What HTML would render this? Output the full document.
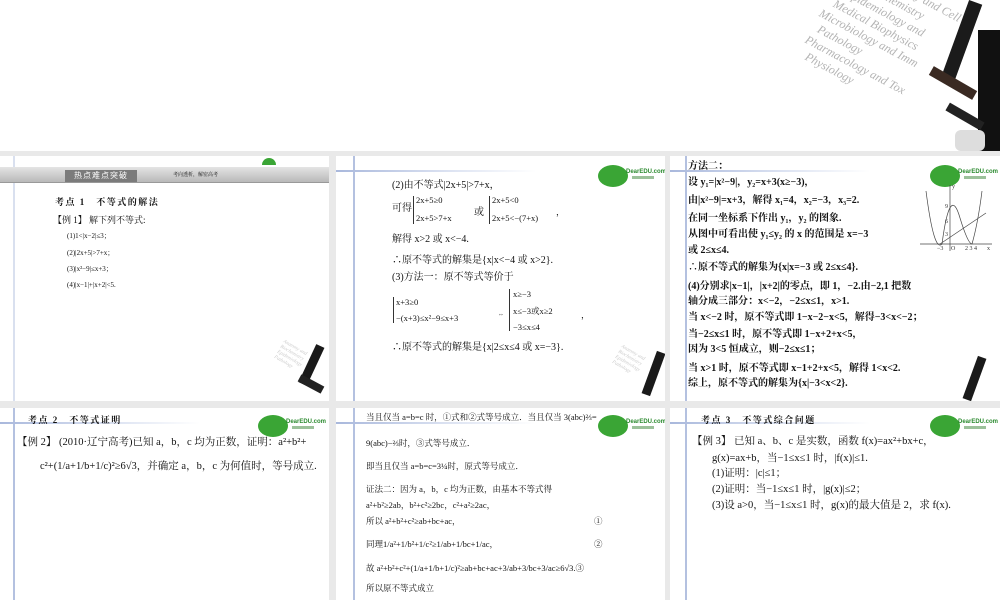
<!DOCTYPE html>
<html><head><meta charset="utf-8"><style>
*{margin:0;padding:0;box-sizing:border-box}
body{width:1000px;height:600px;background:#e9e9e9;position:relative;overflow:hidden;font-family:"Liberation Serif","Noto Serif CJK SC",serif;color:#111}
.s{position:absolute;background:#fff;overflow:hidden}
.t{position:absolute;font-size:9px;white-space:nowrap;line-height:1}
.b{font-weight:bold}
.vl{position:absolute;width:2px;background:#b4c1e0}
.hl{position:absolute;height:2px;background:linear-gradient(90deg,#a9b8dc,#dfe5f3 60%,#fff)}
.logo{position:absolute;width:80px;height:30px}
.logo .c{position:absolute;left:4px;top:4px;width:30px;height:22px;border-radius:50%;background:#3aa535}
.logo .w{position:absolute;left:32px;top:8px;font:bold 6px "Liberation Sans",sans-serif;color:#2b8a2f}
.logo .w2{position:absolute;left:38px;top:15px;width:22px;height:3px;background:#9bc19a}
</style></head><body>

<div class="s" style="left:0;top:0;width:1000px;height:151px">
  <div style="position:absolute;left:800px;top:-10px;width:200px;height:170px;transform:rotate(28deg);color:#b3b3b3;font:italic 12px 'Liberation Serif',serif;line-height:15px">
    <div style="margin-left:40px">Anatomy and Cell</div>
    <div style="margin-left:30px">Biochemistry</div>
    <div style="margin-left:14px">Epidemiology and</div>
    <div style="margin-left:8px">Medical Biophysics</div>
    <div>Microbiology and Imm</div>
    <div style="margin-left:6px">Pathology</div>
    <div>Pharmacology and Tox</div>
    <div style="margin-left:8px">Physiology</div>
  </div>
  <div style="position:absolute;left:955px;top:0;width:14px;height:80px;background:#1b1b1b;transform:rotate(20deg)"></div>
  <div style="position:absolute;left:928px;top:78px;width:50px;height:10px;background:#3a2a22;transform:rotate(30deg)"></div>
  <div style="position:absolute;left:978px;top:30px;width:22px;height:121px;background:#111"></div>
  <div style="position:absolute;left:945px;top:112px;width:40px;height:9px;background:#222;transform:rotate(30deg)"></div>
  <div style="position:absolute;left:955px;top:130px;width:30px;height:21px;background:#ddd;border-radius:6px"></div>
</div>

<!-- slide 1 -->
<div class="s" style="left:0;top:156px;width:329px;height:245px">
  <div class="vl" style="left:13px;top:0;height:245px;opacity:.5"></div>
  <div style="position:absolute;left:0;top:11px;width:329px;height:16px;background:linear-gradient(#e4e4e4,#b9b9b9);border-bottom:1px solid #999"></div>
  <div style="position:absolute;left:65px;top:14px;width:72px;height:12px;background:#7b7b7b;color:#fff;font:8px 'Noto Sans CJK SC',sans-serif;text-align:center;line-height:12px;letter-spacing:1px">热点难点突破</div>
  <div class="t" style="left:173px;top:17px;font-size:5px">考向透析，解密高考</div>
  <div style="position:absolute;left:262px;top:2px;width:14px;height:7px;border-radius:7px 7px 0 0;background:#3aa535"></div>
  <div class="t b" style="left:55px;top:42px;letter-spacing:1.5px">考点 1　不等式的解法</div>
  <div class="t" style="left:53px;top:60px">【例 1】 解下列不等式:</div>
  <div class="t" style="left:67px;top:77px;font-size:7px">(1)1&lt;|x−2|≤3；</div>
  <div class="t" style="left:67px;top:94px;font-size:7px">(2)|2x+5|&gt;7+x；</div>
  <div class="t" style="left:67px;top:110px;font-size:7px">(3)|x²−9|≤x+3；</div>
  <div class="t" style="left:67px;top:126px;font-size:7px">(4)|x−1|+|x+2|&lt;5.</div>
  <div style="position:absolute;left:268px;top:195px;width:60px;height:50px;transform:rotate(30deg);color:#ccc;font:italic 5px serif;line-height:6px">Anatomy and<br>Biochemistry<br>Epidemiology<br>Pathology</div>
  <div style="position:absolute;left:307px;top:188px;width:9px;height:42px;background:#1a1a1a;transform:rotate(25deg)"></div>
  <div style="position:absolute;left:298px;top:224px;width:26px;height:8px;background:#222;transform:rotate(28deg)"></div>
</div>

<!-- slide 2 -->
<div class="s" style="left:336px;top:156px;width:329px;height:245px">
  <div class="vl" style="left:17px;top:0;height:245px"></div>
  <div class="hl" style="left:0;top:14px;width:200px"></div>
  <div class="logo" style="left:258px;top:5px"><div class="c"></div><div class="w">DearEDU.com</div><div class="w2"></div></div>
  <div class="t" style="left:56px;top:25px;font-size:10px">(2)由不等式|2x+5|&gt;7+x，</div>
  <div class="t" style="left:56px;top:48px;font-size:10px">可得</div>
  <div style="position:absolute;left:77px;top:40px;width:3px;height:28px;border-left:1px solid #333"></div>
  <div class="t" style="left:80px;top:40px;font-size:8.5px">2x+5≥0</div>
  <div class="t" style="left:80px;top:58px;font-size:8.5px">2x+5&gt;7+x</div>
  <div class="t" style="left:138px;top:52px;font-size:10px">或</div>
  <div style="position:absolute;left:153px;top:40px;width:3px;height:28px;border-left:1px solid #333"></div>
  <div class="t" style="left:156px;top:40px;font-size:8.5px">2x+5&lt;0</div>
  <div class="t" style="left:156px;top:58px;font-size:8.5px">2x+5&lt;−(7+x)</div>
  <div class="t" style="left:220px;top:52px">，</div>
  <div class="t" style="left:56px;top:79px;font-size:10px">解得 x&gt;2 或 x&lt;−4.</div>
  <div class="t" style="left:56px;top:100px;font-size:10px">∴原不等式的解集是{x|x&lt;−4 或 x&gt;2}.</div>
  <div class="t" style="left:56px;top:117px;font-size:10px">(3)方法一：原不等式等价于</div>
  <div style="position:absolute;left:57px;top:141px;width:3px;height:26px;border-left:1px solid #333"></div>
  <div class="t" style="left:60px;top:142px;font-size:8.5px">x+3≥0</div>
  <div class="t" style="left:60px;top:158px;font-size:8.5px">−(x+3)≤x²−9≤x+3</div>
  <div class="t" style="left:162px;top:156px;font-size:6px">⇔</div>
  <div style="position:absolute;left:173px;top:133px;width:3px;height:42px;border-left:1px solid #333"></div>
  <div class="t" style="left:177px;top:134px;font-size:8.5px">x≥−3</div>
  <div class="t" style="left:177px;top:151px;font-size:8.5px">x≤−3或x≥2</div>
  <div class="t" style="left:177px;top:167px;font-size:8.5px">−3≤x≤4</div>
  <div class="t" style="left:245px;top:155px">，</div>
  <div class="t" style="left:56px;top:187px;font-size:10px">∴原不等式的解集是{x|2≤x≤4 或 x=−3}.</div>
  <div style="position:absolute;left:270px;top:200px;width:60px;height:50px;transform:rotate(30deg);color:#ccc;font:italic 5px serif;line-height:6px">Anatomy and<br>Biochemistry<br>Epidemiology<br>Pathology</div>
  <div style="position:absolute;left:313px;top:195px;width:9px;height:45px;background:#1a1a1a;transform:rotate(20deg)"></div>
</div>

<!-- slide 3 -->
<div class="s" style="left:670px;top:156px;width:330px;height:245px">
  <div class="vl" style="left:15px;top:0;height:245px"></div>
  <div class="hl" style="left:0;top:14px;width:200px"></div>
  <div class="logo" style="left:256px;top:5px"><div class="c"></div><div class="w">DearEDU.com</div><div class="w2"></div></div>
  <div class="t b" style="left:18px;top:6px;font-size:10px">方法二：</div>
  <div class="t b" style="left:18px;top:22px;font-size:10px">设 y₁=|x²−9|，y₂=x+3(x≥−3)，</div>
  <div class="t b" style="left:18px;top:40px;font-size:10px">由|x²−9|=x+3，解得 x₁=4，x₂=−3，x₃=2.</div>
  <div class="t b" style="left:18px;top:58px;font-size:10px">在同一坐标系下作出 y₁，y₂ 的图象.</div>
  <div class="t b" style="left:18px;top:74px;font-size:10px">从图中可看出使 y₁≤y₂ 的 x 的范围是 x=−3</div>
  <div class="t b" style="left:18px;top:90px;font-size:10px">或 2≤x≤4.</div>
  <div class="t b" style="left:18px;top:107px;font-size:10px">∴原不等式的解集为{x|x=−3 或 2≤x≤4}.</div>
  <div class="t b" style="left:18px;top:126px;font-size:10px">(4)分别求|x−1|，|x+2|的零点，即 1，−2.由−2,1 把数</div>
  <div class="t b" style="left:18px;top:141px;font-size:10px">轴分成三部分：x&lt;−2，−2≤x≤1，x&gt;1.</div>
  <div class="t b" style="left:18px;top:157px;font-size:10px">当 x&lt;−2 时，原不等式即 1−x−2−x&lt;5，解得−3&lt;x&lt;−2；</div>
  <div class="t b" style="left:18px;top:174px;font-size:10px">当−2≤x≤1 时，原不等式即 1−x+2+x&lt;5，</div>
  <div class="t b" style="left:18px;top:189px;font-size:10px">因为 3&lt;5 恒成立，则−2≤x≤1；</div>
  <div class="t b" style="left:18px;top:208px;font-size:10px">当 x&gt;1 时，原不等式即 x−1+2+x&lt;5，解得 1&lt;x&lt;2.</div>
  <div class="t b" style="left:18px;top:223px;font-size:10px">综上，原不等式的解集为{x|−3&lt;x&lt;2}.</div>
  <svg style="position:absolute;left:250px;top:27px" width="75" height="68" viewBox="0 0 75 68">
    <g stroke="#444" stroke-width="0.7" fill="none">
      <line x1="0" y1="61" x2="72" y2="61"/><line x1="30" y1="68" x2="30" y2="2"/>
      <path d="M6 8 Q14 70 22 61 Q30 0 40 35 Q48 61 52 61 Q58 40 62 8"/>
      <line x1="20" y1="61" x2="66" y2="30"/>
    </g>
    <g font-size="6" font-family="Liberation Serif" fill="#333">
      <text x="17" y="67">−3</text><text x="31" y="67">O</text><text x="45" y="67">2 3 4</text><text x="67" y="67">x</text>
      <text x="25" y="25">9</text><text x="25" y="40">6</text><text x="25" y="53">3</text><text x="32" y="5">y</text>
    </g>
  </svg>
  <div style="position:absolute;left:300px;top:200px;width:9px;height:45px;background:#1a1a1a;transform:rotate(20deg)"></div>
</div>

<!-- slide 4 -->
<div class="s" style="left:0;top:408px;width:329px;height:192px">
  <div class="vl" style="left:13px;top:0;height:192px"></div>
  <div class="hl" style="left:0;top:14px;width:200px"></div>
  <div class="logo" style="left:254px;top:3px"><div class="c"></div><div class="w">DearEDU.com</div><div class="w2"></div></div>
  <div class="t b" style="left:28px;top:8px;letter-spacing:1.5px">考点 2　不等式证明</div>
  <div class="t" style="left:17px;top:30px;font-size:10.5px">【例 2】 (2010·辽宁高考)已知 a，b，c 均为正数，证明：a²+b²+</div>
  <div class="t" style="left:40px;top:54px;font-size:10.5px">c²+(1/a+1/b+1/c)²≥6√3，并确定 a，b，c 为何值时，等号成立.</div>
</div>

<!-- slide 5 -->
<div class="s" style="left:336px;top:408px;width:329px;height:192px">
  <div class="vl" style="left:17px;top:0;height:192px"></div>
  <div class="hl" style="left:0;top:14px;width:200px"></div>
  <div class="t" style="left:30px;top:5px;font-size:8.5px">当且仅当 a=b=c 时，①式和②式等号成立．当且仅当 3(abc)⅔=</div>
  <div class="logo" style="left:258px;top:3px"><div class="c"></div><div class="w">DearEDU.com</div><div class="w2"></div></div>
  <div class="t" style="left:30px;top:31px;font-size:8.5px">9(abc)−⅔时，③式等号成立．</div>
  <div class="t" style="left:30px;top:54px;font-size:8.5px">即当且仅当 a=b=c=3¼时，原式等号成立．</div>
  <div class="t" style="left:30px;top:77px;font-size:8.5px">证法二：因为 a，b，c 均为正数，由基本不等式得</div>
  <div class="t" style="left:30px;top:93px;font-size:8.5px">a²+b²≥2ab，b²+c²≥2bc，c²+a²≥2ac，</div>
  <div class="t" style="left:30px;top:109px;font-size:8.5px">所以 a²+b²+c²≥ab+bc+ac，</div>
  <div class="t" style="left:258px;top:109px;font-size:8.5px">①</div>
  <div class="t" style="left:30px;top:132px;font-size:8.5px">同理1/a²+1/b²+1/c²≥1/ab+1/bc+1/ac，</div>
  <div class="t" style="left:258px;top:132px;font-size:8.5px">②</div>
  <div class="t" style="left:30px;top:156px;font-size:8.5px">故 a²+b²+c²+(1/a+1/b+1/c)²≥ab+bc+ac+3/ab+3/bc+3/ac≥6√3.③</div>
  <div class="t" style="left:30px;top:176px;font-size:8.5px">所以原不等式成立</div>
</div>

<!-- slide 6 -->
<div class="s" style="left:670px;top:408px;width:330px;height:192px">
  <div class="vl" style="left:15px;top:0;height:192px"></div>
  <div class="hl" style="left:0;top:14px;width:200px"></div>
  <div class="logo" style="left:256px;top:3px"><div class="c"></div><div class="w">DearEDU.com</div><div class="w2"></div></div>
  <div class="t b" style="left:31px;top:8px;letter-spacing:1.5px">考点 3　不等式综合问题</div>
  <div class="t" style="left:22px;top:29px;font-size:10.5px">【例 3】 已知 a、b、c 是实数，函数 f(x)=ax²+bx+c，</div>
  <div class="t" style="left:42px;top:46px;font-size:10.5px">g(x)=ax+b，当−1≤x≤1 时，|f(x)|≤1.</div>
  <div class="t" style="left:42px;top:61px;font-size:10.5px">(1)证明：|c|≤1；</div>
  <div class="t" style="left:42px;top:77px;font-size:10.5px">(2)证明：当−1≤x≤1 时，|g(x)|≤2；</div>
  <div class="t" style="left:42px;top:93px;font-size:10.5px">(3)设 a&gt;0，当−1≤x≤1 时，g(x)的最大值是 2，求 f(x).</div>
</div>
</body></html>
